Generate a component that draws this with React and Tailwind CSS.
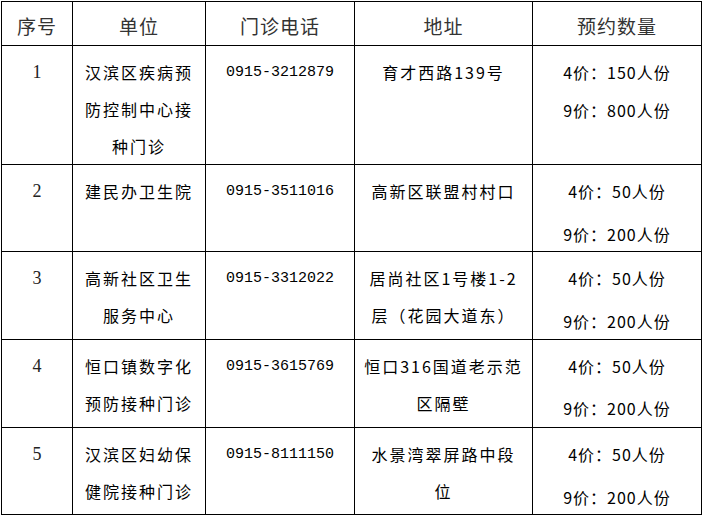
const COLS = 'grid grid-cols-[71px_133px_149px_178px_169px]'

const rows = [
  {
    no: '1',
    unit: ['汉滨区疾病预', '防控制中心接', '种门诊'],
    phone: '0915-3212879',
    addr: ['育才西路139号'],
    qty: ['4价：150人份', '9价：800人份'],
    h: 'h-[119px]',
    gap: 'gap-[1px]',
  },
  {
    no: '2',
    unit: ['建民办卫生院'],
    phone: '0915-3511016',
    addr: ['高新区联盟村村口'],
    qty: ['4价：50人份', '9价：200人份'],
    h: 'h-[87px]',
    gap: 'gap-[6px]',
  },
  {
    no: '3',
    unit: ['高新社区卫生', '服务中心'],
    phone: '0915-3312022',
    addr: ['居尚社区1号楼1-2', '层（花园大道东）'],
    qty: ['4价：50人份', '9价：200人份'],
    h: 'h-[88px]',
    gap: 'gap-[6px]',
  },
  {
    no: '4',
    unit: ['恒口镇数字化', '预防接种门诊'],
    phone: '0915-3615769',
    addr: ['恒口316国道老示范', '区隔壁'],
    qty: ['4价：50人份', '9价：200人份'],
    h: 'h-[88px]',
    gap: 'gap-[5px]',
  },
  {
    no: '5',
    unit: ['汉滨区妇幼保', '健院接种门诊'],
    phone: '0915-8111150',
    addr: ['水景湾翠屏路中段', '位'],
    qty: ['4价：50人份', '9价：200人份'],
    h: 'h-[87px]',
    gap: 'gap-[6px]',
  },
]

const cjk = "font-['Noto_Sans_CJK_SC',sans-serif]"

function Lines({ lines, className = '' }) {
  return (
    <div className={className}>
      {lines.map((l, i) => (
        <div key={i} className="whitespace-nowrap leading-[37px]">{l}</div>
      ))}
    </div>
  )
}

export default function App() {
  return (
    <div className="w-[702px] h-[516px] bg-white pt-[1px] pl-[1px]">
      <div className={`${COLS} w-[701px] border-l border-t border-black text-black`}>
        {['序号', '单位', '门诊电话', '地址', '预约数量'].map(t => (
          <div
            key={t}
            className={`h-[44px] border-r border-b border-black flex items-center justify-center pt-[5px] text-[19px] tracking-[1px] text-[#333] ${cjk}`}
          >
            {t}
          </div>
        ))}

        {rows.map(r => (
          <div key={r.no} className="contents">
            <div className={`${r.h} border-r border-b border-black pt-[8px] text-center font-['Liberation_Serif',serif] text-[18px] leading-[37px] text-[#222]`}>
              {r.no}
            </div>
            <div className={`${r.h} border-r border-b border-black pt-[8px] text-center text-[16px] tracking-[2px] ${cjk}`}>
              <Lines lines={r.unit} />
            </div>
            <div className={`${r.h} border-r border-b border-black pt-[8px] text-center font-['Liberation_Mono',monospace] text-[15px] leading-[37px]`}>
              {r.phone}
            </div>
            <div className={`${r.h} border-r border-b border-black pt-[8px] text-center text-[16px] tracking-[2px] ${cjk}`}>
              <Lines lines={r.addr} />
            </div>
            <div className={`${r.h} border-r border-b border-black pt-[8px] text-center text-[16px] tracking-[1px] ${cjk}`}>
              <Lines lines={r.qty} className={`flex flex-col ${r.gap}`} />
            </div>
          </div>
        ))}
      </div>
    </div>
  )
}
